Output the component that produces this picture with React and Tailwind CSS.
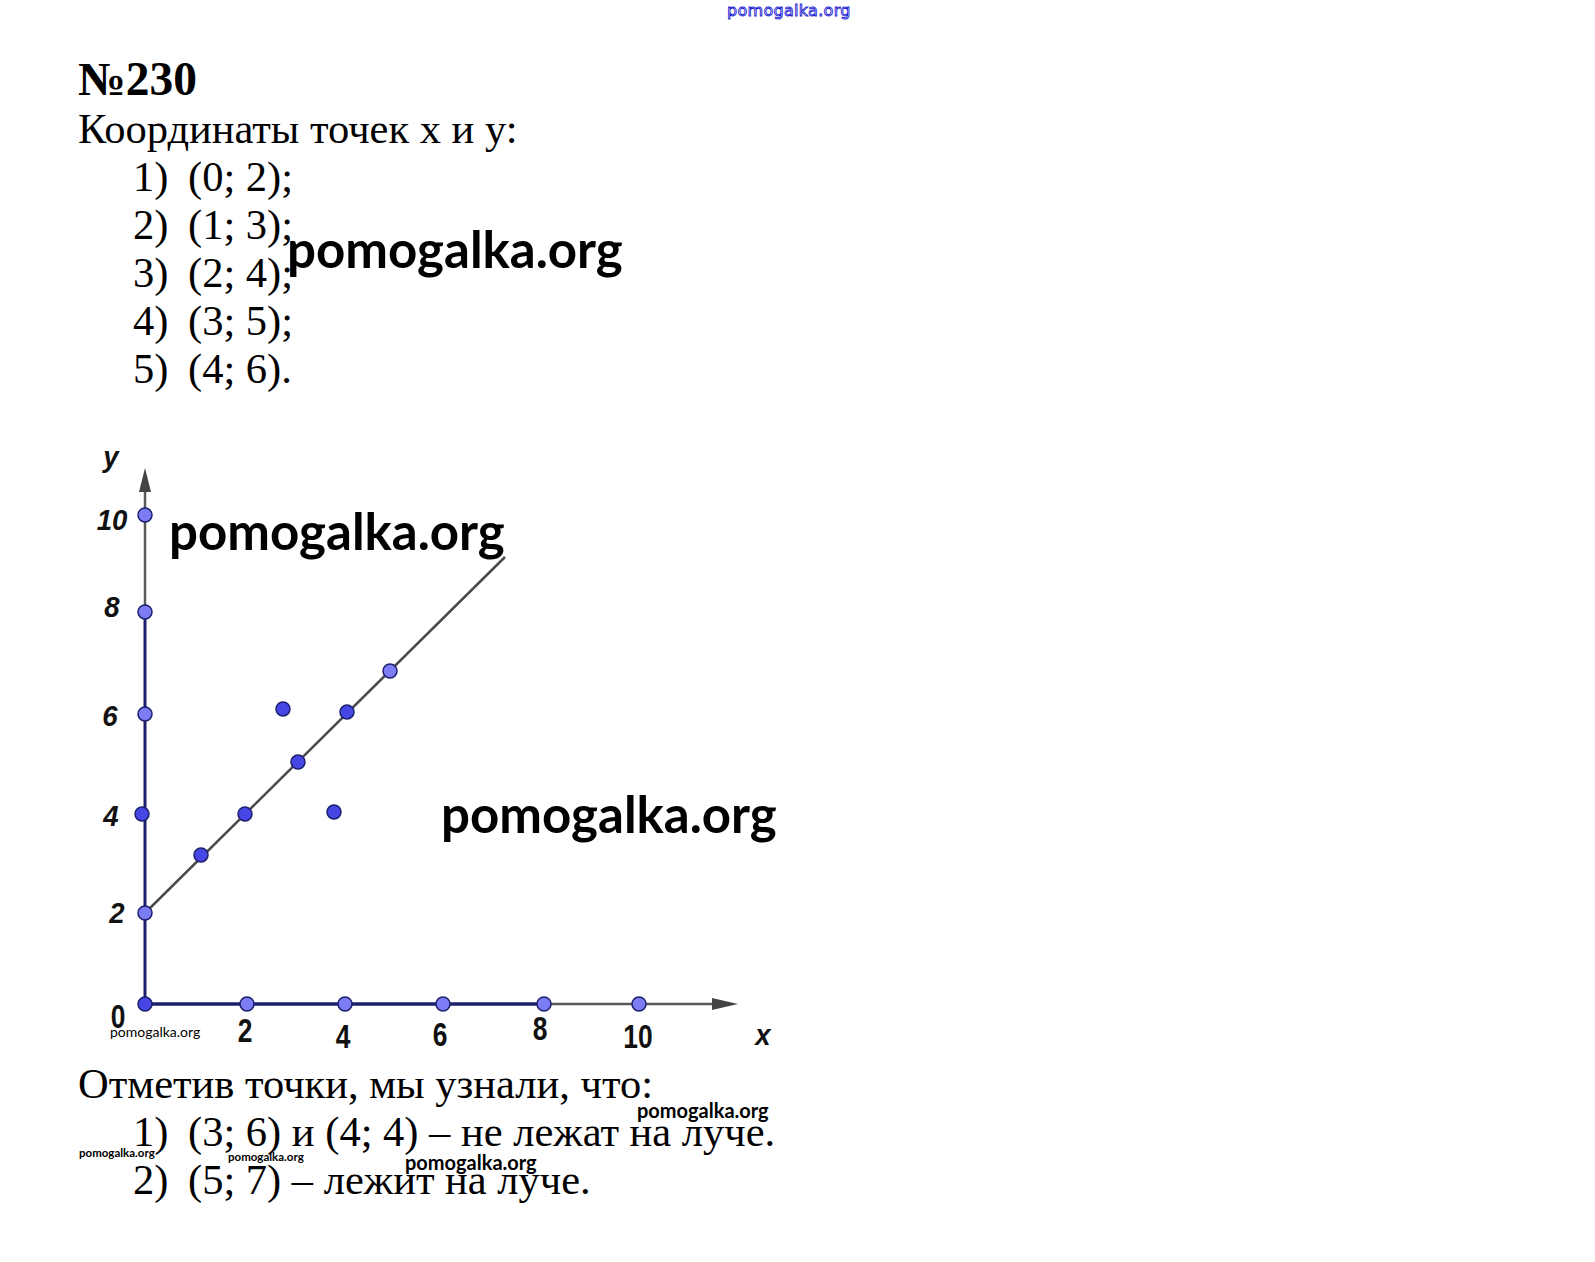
import React from "react";

function Chart() {
  const navy = "#1c1f6e";
  const gray = "#595959";
  const light = "#7c7cf4";
  const dark = "#4646e4";
  const pts = [
    [145, 515, light],
    [145, 612, light],
    [145, 714, light],
    [142, 814, dark],
    [145, 913, light],
    [247, 1004, light],
    [345, 1004, light],
    [443, 1004, light],
    [544, 1004, light],
    [639, 1004, light],
    [201, 855, dark],
    [245, 814, dark],
    [298, 762, dark],
    [347, 712, dark],
    [390, 671, light],
    [283, 709, dark],
    [334, 812, dark],
    [145, 1004, dark],
  ];
  const yl = [
    ["y", 111, 467],
    ["10", 112, 530],
    ["8", 112, 617],
    ["6", 110, 726],
    ["4", 111, 826],
    ["2", 117, 923],
  ];
  const xl = [
    ["0", 118, 1028],
    ["2", 245, 1042],
    ["4", 343, 1048],
    ["6", 440, 1046],
    ["8", 540, 1040],
    ["10", 638, 1048],
  ];
  return (
    <svg width="722" height="667" viewBox="78 393 722 667" className="block font-['Liberation_Sans',Arial,sans-serif] font-bold">
      <line x1="145" y1="612" x2="145" y2="490" stroke={gray} strokeWidth="2.5" />
      <polygon points="145,468 139,492 151,492" fill="#444" />
      <line x1="145" y1="1004" x2="145" y2="612" stroke={navy} strokeWidth="3" />
      <line x1="544" y1="1004" x2="715" y2="1004" stroke={gray} strokeWidth="2.5" />
      <polygon points="738,1004 712,998 712,1010" fill="#444" />
      <line x1="145" y1="1004" x2="544" y2="1004" stroke={navy} strokeWidth="3.5" />
      <line x1="145" y1="913" x2="505" y2="557" stroke="#4a4a4a" strokeWidth="2.5" />
      {pts.map(([x, y, c], i) => (
        <circle key={i} cx={x} cy={y} r="7" fill={c} stroke={navy} strokeWidth="1.5" />
      ))}
      <g fill="#111" fontSize="30" fontStyle="italic">
        {yl.map(([t, x, y]) => (
          <text key={t} transform={`translate(${x} ${y}) scale(0.92 1)`} textAnchor="middle">{t}</text>
        ))}
        <text transform="translate(763 1045) scale(0.92 1)" textAnchor="middle">x</text>
      </g>
      <g fill="#111" fontSize="33">
        {xl.map(([t, x, y]) => (
          <text key={t} transform={`translate(${x} ${y}) scale(0.8 1)`} textAnchor="middle">{t}</text>
        ))}
      </g>
    </svg>
  );
}

function Item({ n, children }) {
  return (
    <li className="flex pl-[55px]">
      <span className="w-[55px] shrink-0">{n}</span>
      <span>{children}</span>
    </li>
  );
}

function Mark({ className }) {
  return (
    <div className={`absolute font-['Lato','Open_Sans',sans-serif] font-bold ${className}`}>pomogalka.org</div>
  );
}

export default function App() {
  return (
    <div className="relative w-[1595px] h-[1262px] bg-white overflow-hidden text-black">
      <main className="flex flex-col pl-[78px] pt-[53px] font-['Liberation_Serif','Times_New_Roman',serif]">
        <h1 className="text-[47.5px] leading-[52px] font-bold">№230</h1>
        <section className="text-[42.5px] leading-[48px]">
          <p>Координаты точек х и у:</p>
          <ol>
            <Item n="1)">(0; 2);</Item>
            <Item n="2)">(1; 3);</Item>
            <Item n="3)">(2; 4);</Item>
            <Item n="4)">(3; 5);</Item>
            <Item n="5)">(4; 6).</Item>
          </ol>
        </section>
        <Chart />
        <section className="text-[42.5px] leading-[48px]">
          <p>Отметив точки, мы узнали, что:</p>
          <ol>
            <Item n="1)">(3; 6) и (4; 4) – не лежат на луче.</Item>
            <Item n="2)">(5; 7) – лежит на луче.</Item>
          </ol>
        </section>
      </main>

      <div className="absolute left-[727px] top-[0px] text-[16px] leading-[22px] tracking-[0.3px] text-white [-webkit-text-stroke:0.9px_#1e1ed2] font-['DejaVu_Sans',sans-serif]">
        pomogalka.org
      </div>
      <Mark className="left-[287px] top-[219px] text-[51px] leading-[60px]" />
      <Mark className="left-[169px] top-[501px] text-[51px] leading-[60px]" />
      <Mark className="left-[441px] top-[784px] text-[51px] leading-[60px]" />
      <Mark className="left-[110px] top-[1023px] text-[14px] leading-[18px] font-normal" />
      <Mark className="left-[637px] top-[1098px] text-[20px] leading-[24px]" />
      <Mark className="left-[79px] top-[1145px] text-[11.5px] leading-[16px]" />
      <Mark className="left-[228px] top-[1149px] text-[11.5px] leading-[16px]" />
      <Mark className="left-[405px] top-[1150px] text-[20px] leading-[24px]" />
    </div>
  );
}
